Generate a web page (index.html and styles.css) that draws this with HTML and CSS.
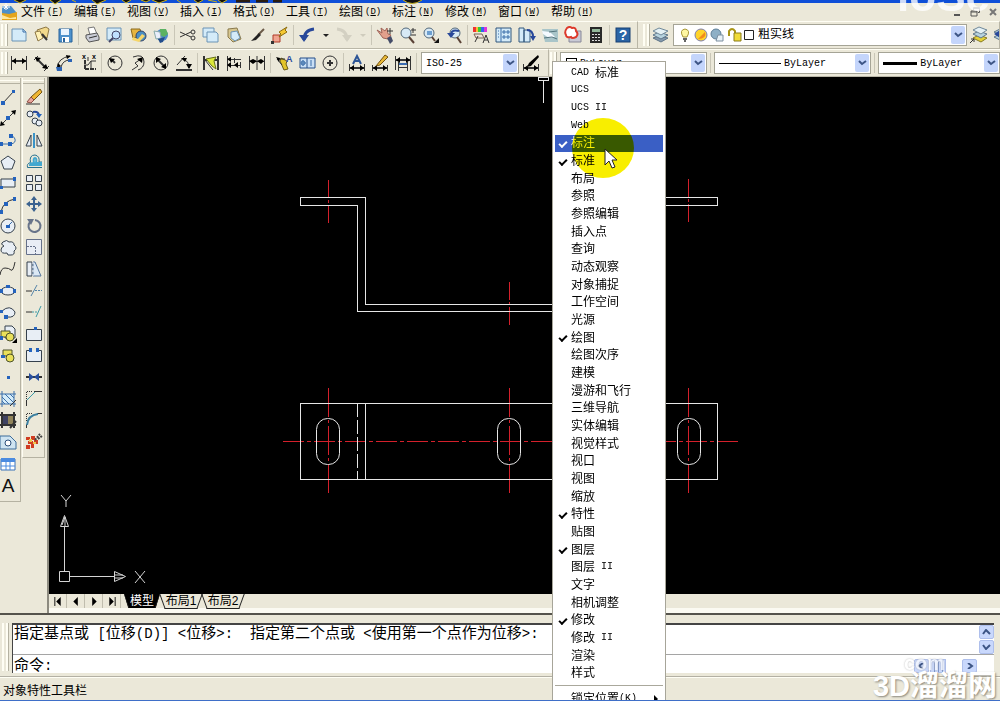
FILE: index.html
```
<!DOCTYPE html>
<html lang="zh-CN">
<head>
    <meta charset="UTF-8">
    <meta name="viewport" content="width=device-width, initial-scale=1.0">
    <title>CAD</title>
    <link rel="stylesheet" href="styles.css">
</head>
<body>
    <div class="app">
        <div class="title-strip">
            <svg class="title-marks" width="460" height="6" viewBox="0 0 460 6">
                <path class="mark" d="M14 0l6 3 6-3M50 0l5 4 6-4M72 0l4 2M92 0l5 4 9-4M122 0l4 3 5-3M141 0l5 2 4-2M152 0l7 3 8-3M177 0l4 3M194 0l4 3 5-3M208 0l9 2M218 0l4 3 5-3"/>
                <path class="mark-dark" d="M236 1h14M256 1h12M273 1h9"/>
                <path class="mark" d="M403 0q9 7 19 0"/>
            </svg>
        </div>

        <nav class="menubar">
            <svg class="app-icon" width="16" height="18" viewBox="0 0 16 18"><path fill="#4c8fc9" d="M1 3l9 0 5 6v3H1z"/><path fill="#e4a51c" d="M1 10l7 1 8-2v8H1z"/><path fill="#ffe79b" d="M1 12l8 3 6-1v2H1z"/><path stroke="#fff" fill="none" d="M5 0v7M1 4h8M3 2l4 4M7 2L3 6"/></svg>
            <div class="menus">
                <button>文件<span class="key">(<u>F</u>)</span></button>
                <button>编辑<span class="key">(<u>E</u>)</span></button>
                <button>视图<span class="key">(<u>V</u>)</span></button>
                <button>插入<span class="key">(<u>I</u>)</span></button>
                <button>格式<span class="key">(<u>O</u>)</span></button>
                <button>工具<span class="key">(<u>T</u>)</span></button>
                <button>绘图<span class="key">(<u>D</u>)</span></button>
                <button>标注<span class="key">(<u>N</u>)</span></button>
                <button>修改<span class="key">(<u>M</u>)</span></button>
                <button>窗口<span class="key">(<u>W</u>)</span></button>
                <button>帮助<span class="key">(<u>H</u>)</span></button>
            </div>
            <div class="window-buttons">
                <button aria-label="最小化"><svg width="10" height="10" viewBox="0 0 10 10"><path stroke="#555" stroke-width="2" d="M2 8h6"/></svg></button>
                <button aria-label="还原"><svg width="10" height="10" viewBox="0 0 10 10"><path stroke="#555" fill="none" d="M3.500 3V.5h6v5H8M3 1.500h6M1 4h6v5H1zM1 5h6"/></svg></button>
                <button aria-label="关闭"><svg width="10" height="10" viewBox="0 0 10 10"><path stroke="#777" stroke-width="2" d="M2 2l6 6M8 2L2 8"/></svg></button>
            </div>
        </nav>

        <div class="toolrow">
            <div class="toolbar standard">
                <span class="grip"></span>
                <button aria-label="新建"><svg viewBox="0 0 18 18"><path class="sheet" d="M2 3h11l3 3v9H2z"/><path class="b" d="M13 3v3h3"/></svg></button>
                <button aria-label="打开"><svg viewBox="0 0 18 18"><path fill="#f2d98c" stroke="#8d7745" d="M4 4l9-3 3 2-2 9-8-2z"/><path fill="#fff1b5" stroke="#8d7745" d="M2 6l5-1 3 7-5 3z"/><path stroke="#333" stroke-width="2" d="M9 8l5 6"/></svg></button>
                <button aria-label="保存"><svg viewBox="0 0 18 18"><path fill="#4d91cc" stroke="#28629b" d="M3 3h13v13H3z"/><path fill="#e9f4ff" d="M5 3h8v6H5z"/><path fill="#fff" d="M6 11h7v5H6z"/><path fill="#28629b" d="M7 12h2v4H7z"/></svg></button>
                <span class="sep"></span>
                <button aria-label="打印"><svg viewBox="0 0 18 18"><path fill="#fff" stroke="#777" d="M5 2l6-1 3 7-7 1z"/><path fill="#c9ccd6" stroke="#555" d="M3 9l11-2 2 4v3l-10 2-3-4z"/><path class="k" d="M6 12l8-2"/></svg></button>
                <button aria-label="打印预览"><svg viewBox="0 0 18 18"><path class="sheet" d="M1 2h14v12H1z"/><circle cx="10" cy="9" r="4" fill="#bfe0ff" stroke="#446"/><path stroke="#446" stroke-width="2" d="M7 12l-4 4"/></svg></button>
                <button aria-label="发布"><svg viewBox="0 0 18 18"><path fill="#e5b440" stroke="#8a6a1e" d="M2 3h9l2 7-9 2z"/><circle cx="12" cy="10" r="5" fill="#4b8fc2" stroke="#346"/><path fill="#f6d66a" d="M4 11l5 2 4-5 3 2-6 6-7-2z"/></svg></button>
                <button aria-label="三维 DWF"><svg viewBox="0 0 18 18"><circle cx="10" cy="9" r="6" fill="#4d88cc"/><path fill="#5bb262" d="M8 3l6 0 2 5-4 3-4-2z"/><path fill="#e9eefb" stroke="#8aa" d="M2 5l6 1 1 6-5 1z"/><path fill="#234d8c" d="M6 13l7-2-2 5-3 1z"/></svg></button>
                <span class="sep"></span>
                <button aria-label="剪切"><svg viewBox="0 0 18 18"><path class="k" d="M1 6l11 5M1 11l11-5"/><circle cx="14" cy="6" r="2" class="k"/><circle cx="14" cy="12" r="2" class="k"/></svg></button>
                <button aria-label="复制"><svg viewBox="0 0 18 18"><path class="sheet" d="M1 2h11v9H1z"/><path class="sheet" d="M5 6h9l2 2v8H5z"/></svg></button>
                <button aria-label="粘贴"><svg viewBox="0 0 18 18"><path fill="#d8c78f" stroke="#8a7a4c" d="M3 3l9-1 4 11-8 3-5-5z"/><path class="sheet" d="M6 6l6-1 3 7-5 3-4-3z"/></svg></button>
                <button aria-label="特性匹配"><svg viewBox="0 0 18 18"><path stroke="#6b5a48" stroke-width="2" d="M16 3l-6 6"/><path fill="#222" d="M11 7l2 2-5 5-5 1z"/></svg></button>
                <button aria-label="块编辑器"><svg viewBox="0 0 18 18"><path fill="#f0a490" stroke="#b03b28" d="M2 9h7v7H2z"/><path fill="#f5c832" stroke="#8a6a10" d="M16 1l-8 5 2 2-2 3 8-5-2-2z"/><path fill="#333" d="M0 15h3v3H0z"/></svg></button>
                <span class="sep"></span>
                <button aria-label="放弃"><svg viewBox="0 0 18 18"><path fill="none" stroke="#28489a" stroke-width="3" d="M6 14Q6 4 16 3"/><path fill="#28489a" d="M1 9h10l-5 7z"/></svg></button>
                <button class="drop" aria-label="放弃列表"><svg viewBox="0 0 8 18"><path fill="#222" d="M1 8h6l-3 3z"/></svg></button>
                <button aria-label="重做"><svg viewBox="0 0 18 18"><path fill="none" stroke="#d3d0c2" stroke-width="3" d="M12 14Q12 4 2 3"/><path fill="#d3d0c2" d="M17 9H7l5 7z"/></svg></button>
                <button class="drop" aria-label="重做列表"><svg viewBox="0 0 8 18"><path fill="#cfccbd" d="M1 8h6l-3 3z"/></svg></button>
                <span class="sep"></span>
                <button aria-label="平移"><svg viewBox="0 0 18 18"><path fill="#e2a08c" stroke="#a06458" d="M1 4l5 3-1-5 4 3 2-3 1 6 3 1-3 4-5-1z"/><path fill="#444c68" d="M11 12l4-2 2 5-3 3z"/><path class="k" d="M14 2v6M11 5h6"/></svg></button>
                <button aria-label="实时缩放"><svg viewBox="0 0 18 18"><circle cx="7" cy="7" r="5" class="lens"/><path stroke="#5a4236" stroke-width="2" d="M10 11l5 6"/><path class="k" d="M14 2v5M12 4h5M12 9h5"/></svg></button>
                <button aria-label="窗口缩放"><svg viewBox="0 0 18 18"><circle cx="7" cy="7" r="5" class="lens"/><path fill="#6d9fd0" d="M5 5h5v4H5z"/><path stroke="#5a4236" stroke-width="2" d="M10 11l3 4"/><path fill="#111" d="M17 12v5h-5z"/></svg></button>
                <button aria-label="缩放上一个"><svg viewBox="0 0 18 18"><circle cx="10" cy="7" r="5" class="lens"/><path stroke="#5a4236" stroke-width="2" d="M12 11l4 6"/><path fill="none" stroke="#28489a" stroke-width="2" d="M6 8q1-5 8-3"/><path fill="#28489a" d="M2 7h8l-4 5z"/></svg></button>
                <span class="sep"></span>
                <button aria-label="特性"><svg viewBox="0 0 18 18"><path fill="#e33" d="M1 1h4v5H1z"/><path fill="#fb3" d="M4 1h2v5H4z"/><path fill="#3c3" d="M6 1h3v5H6z"/><path fill="#36e" d="M9 1h3v5H9z"/><path fill="#d3d" d="M12 1h3v5h-3z"/><path fill="#efe3dd" stroke="#765" d="M2 8h8l2 4H4z"/><path class="k" d="M3 16l3-6M11 17l3-8 3 8M12 14h4"/></svg></button>
                <button aria-label="设计中心"><svg viewBox="0 0 18 18"><path class="sheet dark" d="M1 2h15v14H1z"/><path class="b" d="M6 2v14M3 5h1M3 8h1M3 11h1M8 5h2v2H8zM12 5h2v2h-2zM8 10h2v2H8zM12 10h2v2h-2z"/></svg></button>
                <button aria-label="工具选项板"><svg viewBox="0 0 18 18"><path class="sheet dark" d="M1 2h5v14H1zM6 4h6v12H6z"/><path fill="none" stroke="#28489a" stroke-width="2" d="M9 4q6 0 6 7"/><path fill="#28489a" d="M12 10h6l-3 5z"/></svg></button>
                <button aria-label="图纸集"><svg viewBox="0 0 18 18"><path fill="#a9c5c9" d="M1 3h16v13H4z"/><path fill="#f4faff" d="M1 5l8 1 5 5-6 1-6-4z"/><path stroke="#53747d" fill="none" d="M3 12l8-1 5 2M8 6l8-1"/></svg></button>
                <button aria-label="标记集"><svg viewBox="0 0 18 18"><path fill="#c9cad6" stroke="#889" d="M5 5h12v11H5z"/><path fill="#fff" stroke="#dd3a2c" stroke-width="2" d="M3 2q3-2 5 0 4-1 4 3 3 3 0 6-4 2-5 0-5 1-5-2-2-3 1-7z"/></svg></button>
                <button aria-label="计算器"><svg viewBox="0 0 18 18"><path fill="#292929" d="M3 1h12v16H3z"/><path fill="#93b89a" d="M5 3h8v3H5z"/><path stroke="#ddd" stroke-width="1" stroke-dasharray="2 1" d="M5 8.500h8M5 11.500h8M5 14.500h8"/></svg></button>
                <span class="sep"></span>
                <button aria-label="帮助"><svg viewBox="0 0 18 18"><rect x="2" y="2" width="14" height="14" fill="#2b64a5" stroke="#173f73"/><text x="9" y="14" class="icon-text help">?</text></svg></button>
            </div>
            <div class="toolbar layers">
                <span class="grip"></span>
                <button aria-label="图层特性管理器"><svg viewBox="0 0 18 18"><path fill="#8499ad" stroke="#5d7488" d="M1 12l6-2 9 2-7 4z"/><path fill="#b7d3df" stroke="#5d7488" d="M1 9l6-3 9 3-7 4z"/><path fill="#e5f1f5" stroke="#6f8899" d="M1 5l6-3 9 3-7 4z"/></svg></button>
                <div class="combo layer-combo">
                    <svg width="76" height="16" viewBox="0 0 76 16"><path fill="#fff7a2" stroke="#a79635" d="M4 10Q0 3 6 2q6 1 2 8z"/><path stroke="#666" stroke-width="2" d="M4 12h4M5 14h2"/><circle cx="22" cy="8" r="6" fill="#ffd42b" stroke="#7d7fae"/><path fill="#f18a1c" d="M19 12l7-7q2 7-7 7z"/><circle cx="37" cy="7" r="5" fill="#8eb0c6" stroke="#5f7f97"/><path fill="#e7f1f7" stroke="#7c8fa0" d="M39 8h5v6h-7z"/><path fill="none" stroke="#a99516" stroke-width="2" d="M50 9V4q3-4 6 0v4"/><path fill="#f0db38" stroke="#8b7d1a" d="M55 6h7v8h-7z"/><path fill="#fff" stroke="#222" d="M65.500 3.500h9v9h-9z"/></svg>
                    <select aria-label="图层"><option>粗实线</option></select>
                    <span class="arrow"><svg viewBox="0 0 9 6"><path d="M1 1l3 3 4-3"/></svg></span>
                </div>
                <button aria-label="将对象的图层置为当前"><svg viewBox="0 0 18 18"><path fill="#e4d23a" stroke="#887b21" d="M3 12l6-3 8 3-6 4z"/><path fill="#b7d3df" stroke="#5d7488" d="M3 8l6-3 8 3-6 4z"/><path fill="#e5f1f5" stroke="#6f8899" d="M3 4l6-3 8 3-6 4z"/><path class="k" d="M0 17l4-4M1 13h3v3"/></svg></button>
                <button aria-label="上一个图层"><svg viewBox="0 0 18 18"><path fill="#b7d3df" stroke="#5d7488" d="M1 11l6-3 8 3-6 4zM1 6l6-3 8 3-6 4z"/><path fill="#28489a" d="M1 8l6-4v8z"/></svg></button>
            </div>
        </div>

        <div class="toolrow">
            <div class="toolbar dims">
                <span class="grip"></span>
                <button aria-label="线性"><svg viewBox="0 0 18 18"><path class="k" d="M1.500 2v14M16.500 2v14"/><path class="k2" d="M2 7h14"/><path d="M2 7l4-3v6zM16 7l-4-3v6z"/></svg></button>
                <button aria-label="对齐"><svg viewBox="0 0 18 18"><path class="k" d="M1 6l4-4M11 17l5-5"/><path class="k2" d="M4 5l9 9"/><path d="M2 3l6 1-4 4zM15 15l-6-1 4-4z"/></svg></button>
                <button aria-label="弧长"><svg viewBox="0 0 18 18"><path class="k" d="M5 13Q7 6 14 6M1 14Q2 4 14 2"/><path d="M1 15l1-6 3 3zM15 2l-5-1 1 4z"/><path fill="#2b63b5" d="M0 13h6v4H1zM12 5h4v3h-4z"/></svg></button>
                <button aria-label="坐标"><svg viewBox="0 0 18 18"><path class="k2" d="M6 6v9M6 15h11" stroke-dasharray="4 1"/><path class="k" d="M5 11h4l3-4h5M12 7v9M9 3v4"/><text x="3" y="5" class="icon-text tiny">x</text><text x="13" y="5" class="icon-text tiny">x</text></svg></button>
                <span class="sep"></span>
                <button aria-label="半径"><svg viewBox="0 0 18 18"><circle cx="9" cy="9" r="7" class="k"/><path class="k2" d="M6 6l3 3"/><path d="M3 4l6 1-4 4z"/></svg></button>
                <button aria-label="折弯"><svg viewBox="0 0 18 18"><path class="k" d="M4 3q11-4 11 5 0 6-6 8"/><path class="k" d="M3 16l6-4-3-3 6-4"/><path d="M14 3l-1 6-5-4z"/></svg></button>
                <button aria-label="直径"><svg viewBox="0 0 18 18"><circle cx="9" cy="9" r="7" class="k"/><path class="k2" d="M5 5l8 8"/><path d="M4 3l5 2-5 4zM14 15l-5-2 5-4z"/></svg></button>
                <button aria-label="角度"><svg viewBox="0 0 18 18"><path class="k" d="M2 11L10 2M8 5q6 2 6 9"/><path class="k2" d="M1 16h16"/><path d="M6 4l6 0-2 4zM14 15l-3-5h6z"/></svg></button>
                <span class="sep"></span>
                <button aria-label="快速标注"><svg viewBox="0 0 18 18"><path class="k2" d="M2 2v14M16 2v14M2 6h14"/><path fill="#dce83a" stroke="#66701a" d="M4 5l10-2-2 4 2 8-4-3z"/><path class="k" d="M3 6l8 10"/></svg></button>
                <button aria-label="基线"><svg viewBox="0 0 18 18"><path class="k" d="M2.500 2v15M9.500 4v5M15.500 8v6M2 5.500h14M2 11.500h14"/><path d="M2 5l4-2v5zM9 11l4-3v6zM2 11l4-3v6z"/></svg></button>
                <button aria-label="连续"><svg viewBox="0 0 18 18"><path class="k" d="M1.500 2v14M9 2v14M16.500 2v14M1 7.500h15"/><path d="M1 7l4-2v5zM9 7L5 5v5zM9 7l4-2v5zM16 7l-3-2v5z"/></svg></button>
                <span class="sep"></span>
                <button aria-label="快速引线"><svg viewBox="0 0 18 18"><path fill="#e3c52a" stroke="#6b5d16" d="M6 4l6 3-1 3 2 5-4 1-4-9z"/><path class="k" d="M2 5h8M2 5l5 6"/><path d="M1 3l4 1-1 4z"/><text x="11" y="8" class="icon-text small">A</text></svg></button>
                <button aria-label="公差"><svg viewBox="0 0 18 18"><path fill="#c9dff5" stroke="#254f8a" d="M2 4h15v10H2zM9 4v10"/><circle cx="5" cy="9" r="2" class="b"/><path class="b" d="M3 9h5M5 6v6M13 6v6"/></svg></button>
                <button aria-label="圆心标记"><svg viewBox="0 0 18 18"><circle cx="9" cy="9" r="7" class="k"/><path class="k2" d="M9 6v6M6 9h6"/></svg></button>
                <span class="sep"></span>
                <button aria-label="编辑标注"><svg viewBox="0 0 18 18"><path class="k" d="M1.500 10v7M16.500 10v7"/><path class="k2" d="M2 14h14"/><path d="M2 14l4-3v6zM16 14l-4-3v6z"/><path stroke="#2d5596" stroke-width="2" fill="none" d="M5 10l4-8 4 8M6 7h6"/></svg></button>
                <button aria-label="编辑标注文字"><svg viewBox="0 0 18 18"><path class="k" d="M1.500 11v6M16.500 11v6"/><path class="k2" d="M2 14h14"/><path d="M2 14l4-3v6zM16 14l-4-3v6z"/><path fill="#e9b837" stroke="#735413" d="M14 1l3 2-8 8-4 1z"/></svg></button>
                <button aria-label="标注更新"><svg viewBox="0 0 18 18"><path stroke="#3b6cb0" stroke-width="2" d="M4 10h10"/><path class="k" d="M1.500 2v14M16.500 2v14M4.500 8v9M13.500 8v9M4 13.500h10"/><path class="k2" d="M2 6h14"/><path d="M2 6l4-3v6zM16 6l-4-3v6z"/></svg></button>
                <span class="sep"></span>
                <div class="combo style-combo">
                    <select aria-label="标注样式"><option>ISO-25</option></select>
                    <span class="arrow"><svg viewBox="0 0 9 6"><path d="M1 1l3 3 4-3"/></svg></span>
                </div>
                <button aria-label="标注样式管理"><svg viewBox="0 0 18 18"><path class="k" d="M1.500 10v7M16.500 10v7"/><path class="k2" d="M2 14h14"/><path d="M2 14l4-3v6zM16 14l-4-3v6zM16 1l1 2-8 9-4 1 2-4z"/></svg></button>
            </div>
            <div class="toolbar props">
                <span class="grip"></span>
                <div class="combo color-combo">
                    <span class="swatch"></span>
                    <select aria-label="颜色"><option>ByLayer</option></select>
                    <span class="arrow"><svg viewBox="0 0 9 6"><path d="M1 1l3 3 4-3"/></svg></span>
                </div>
                <span class="sep"></span>
                <div class="combo linetype-combo">
                    <span class="line"></span>
                    <select aria-label="线型"><option>ByLayer</option></select>
                    <span class="arrow"><svg viewBox="0 0 9 6"><path d="M1 1l3 3 4-3"/></svg></span>
                </div>
                <span class="sep"></span>
                <div class="combo weight-combo">
                    <span class="line thick"></span>
                    <select aria-label="线宽"><option>ByLayer</option></select>
                    <span class="arrow"><svg viewBox="0 0 9 6"><path d="M1 1l3 3 4-3"/></svg></span>
                </div>
            </div>
        </div>

        <div class="workspace">
            <div class="dock">
                <div class="palette draw">
                    <button aria-label="直线"><svg viewBox="0 0 18 18"><path class="k" d="M4 15L15 3"/><path class="dot" d="M2 13h4v4H2zM13 2h3v3h-3z"/></svg></button>
                    <button aria-label="构造线"><svg viewBox="0 0 18 18"><path class="k" d="M2 16L16 2"/><path d="M1 17l1-5 4 4zM17 1l-5 1 4 4z"/><path class="dot" d="M7 7h4v4H7z"/></svg></button>
                    <button aria-label="多段线"><svg viewBox="0 0 18 18"><path class="b" d="M2 13h10q5-1 4-5-1-3-4-3"/><path class="dot" d="M1 11h3v4H1zM9 11h4v4H9zM10 3h4v4h-4z"/></svg></button>
                    <button aria-label="正多边形"><svg viewBox="0 0 18 18"><path class="shape" d="M9 3l7 5-3 8H5L2 8z"/></svg></button>
                    <button aria-label="矩形"><svg viewBox="0 0 18 18"><path class="shape" d="M2 5h14v8H2z"/><path class="dot" d="M0 12h4v3H0zM14 3h3v4h-3z"/></svg></button>
                    <button aria-label="圆弧"><svg viewBox="0 0 18 18"><path class="k" d="M2 16Q4 5 16 3"/><path class="dot" d="M0 14h4v4H0zM5 6h4v4H5zM14 1h3v4h-3z"/></svg></button>
                    <button aria-label="圆"><svg viewBox="0 0 18 18"><circle cx="9" cy="9" r="7" class="shape"/><path class="b" d="M9 9l4-4"/><path class="dot" d="M7 8h4v3H7z"/></svg></button>
                    <button aria-label="修订云线"><svg viewBox="0 0 18 18"><path class="shape" d="M5 7q-4-2-1-4 4-3 6 0 5-1 5 3 4 3 0 6 1 4-3 4-4 1-4-2-6 1-6-3 0-3 3-4z"/></svg></button>
                    <button aria-label="样条曲线"><svg viewBox="0 0 18 18"><path class="k" d="M1 15q1-7 5-7t6 2 4-8"/></svg></button>
                    <button aria-label="椭圆"><svg viewBox="0 0 18 18"><ellipse cx="9" cy="9" rx="7" ry="4" class="shape"/><path class="dot" d="M0 7h4v4H0zM7 3h4v3H7zM14 7h3v4h-3z"/></svg></button>
                    <button aria-label="椭圆弧"><svg viewBox="0 0 18 18"><path class="shape" d="M3 7q8-7 13 1 0 6-8 5"/><path class="dot" d="M0 6h4v3H0zM5 11h4v4H5z"/></svg></button>
                    <button aria-label="插入块"><svg viewBox="0 0 18 18"><path class="shape" d="M6 1h7l3 3v9H6z"/><path class="gold" d="M2 6h9v6H2z"/><circle cx="11" cy="12" r="4" class="gold"/><path d="M18 13v5h-5z"/><path class="dot" d="M0 11h4v4H0z"/></svg></button>
                    <button aria-label="创建块"><svg viewBox="0 0 18 18"><path class="gold" d="M4 3h9v6H4z"/><circle cx="11" cy="11" r="4" class="gold"/><path class="dot" d="M2 8h4v3H2z"/></svg></button>
                    <button aria-label="点"><svg viewBox="0 0 18 18"><path class="dot" d="M8 8h3v3H8z"/></svg></button>
                    <button aria-label="图案填充"><svg viewBox="0 0 18 18"><path fill="#d5ecf8" d="M3 4h12v10H3z"/><path class="b" d="M3 7l7 7M3 11l3 3M6 4l9 9M11 4l4 4M0 4h17M0 14h17M3 1v16M15 1v16"/><path class="k" d="M11 16l6-6"/></svg></button>
                    <button aria-label="渐变色"><svg viewBox="0 0 18 18"><path fill="#3e4262" d="M3 4h6v10H3z"/><path fill="#91845a" d="M9 4h6v10H9z"/><path class="k2" d="M0 4h17M0 14h17M3 1v16M15 1v16M11 17l6-7"/></svg></button>
                    <button aria-label="面域"><svg viewBox="0 0 18 18"><path fill="#cfe4f1" stroke="#3c6c9a" d="M1 3h10l6 6v7H1z"/><circle cx="9" cy="10" r="3" fill="#fff" stroke="#2b4e79"/></svg></button>
                    <button aria-label="表格"><svg viewBox="0 0 18 18"><path fill="#fff" stroke="#3b72ba" d="M2 4h14v11H2z"/><path fill="#4b8be0" d="M2 3h14v4H2z"/><path stroke="#4b8be0" d="M2 11h14M7 6v9M11 6v9"/></svg></button>
                    <button aria-label="多行文字"><svg viewBox="0 0 18 18"><text x="9" y="16" class="icon-text letter">A</text></svg></button>
                </div>
                <div class="palette modify">
                    <button aria-label="删除"><svg viewBox="0 0 18 18"><path class="k" d="M1 16h14"/><path fill="#f0b632" stroke="#735413" d="M15 1l2 3-8 8-3-3z"/><path fill="#e8a59b" stroke="#8b4c43" d="M6 9l3 3-3 3-4-1z"/></svg></button>
                    <button aria-label="复制对象"><svg viewBox="0 0 18 18"><circle cx="5" cy="5" r="3" class="shape"/><circle cx="10" cy="12" r="3" class="shape"/><circle cx="14" cy="14" r="3" class="shape"/><path stroke="#28489a" stroke-width="2" fill="none" d="M8 3q5-1 6 3"/><path class="dot" d="M11 5h6l-3 4z"/></svg></button>
                    <button aria-label="镜像"><svg viewBox="0 0 18 18"><path class="shape" d="M6 4v11H1zM12 4v11h5z"/><path stroke="#3a93c8" stroke-width="2" d="M9 2v15"/></svg></button>
                    <button aria-label="偏移"><svg viewBox="0 0 18 18"><path fill="none" stroke="#28728f" d="M17 15.500H2.500q-1-4 3-5Q4 3 10 3q5 1 4 7h3"/><path fill="none" stroke="#43a8d0" stroke-width="2" d="M17 13H5q0-2 4-2-1-5 1-5t1 5h6"/></svg></button>
                    <button aria-label="阵列"><svg viewBox="0 0 18 18"><path class="shape" d="M1.500 1.500h6v6h-6zM10.500 1.500h6v6h-6zM1.500 10.500h6v6h-6zM10.500 10.500h6v6h-6z"/></svg></button>
                    <button aria-label="移动"><svg viewBox="0 0 18 18"><path stroke="#3b628f" stroke-width="2" d="M9 3v12M3 9h12"/><path fill="#3b628f" d="M9 1l3 4H6zM9 17l3-4H6zM1 9l4-3v6zM17 9l-4-3v6z"/></svg></button>
                    <button aria-label="旋转"><svg viewBox="0 0 18 18"><path fill="none" stroke="#68748a" stroke-width="2" d="M5 5a6 6 0 1 0 5-2"/><path fill="#68748a" d="M2 2h7l-3 6z"/></svg></button>
                    <button aria-label="缩放"><svg viewBox="0 0 18 18"><path fill="#e9edf5" stroke="#66718a" d="M1.500 1.500h15v15h-15z"/><path fill="none" stroke="#66718a" stroke-dasharray="2 1" d="M2 8.500h8.500V17"/></svg></button>
                    <button aria-label="拉伸"><svg viewBox="0 0 18 18"><path class="shape" d="M2 2h5v14H2z"/><path fill="#dbe8f4" stroke="#55759c" d="M8 2h2l6 14H8z"/><path stroke="#fff" stroke-dasharray="2 2" d="M8 2v14"/></svg></button>
                    <button aria-label="修剪"><svg viewBox="0 0 18 18"><path class="k" d="M1 9h6"/><path stroke="#5584a8" fill="none" d="M6 14l6-11"/><path stroke="#5584a8" stroke-dasharray="2 1" d="M10 8.500h7"/></svg></button>
                    <button aria-label="延伸"><svg viewBox="0 0 18 18"><path class="k" d="M1 9h6"/><path stroke="#3d9aa6" stroke-dasharray="2 1" d="M7 9h5"/><path stroke="#3d9aa6" d="M11 14l5-11"/></svg></button>
                    <button aria-label="打断于点"><svg viewBox="0 0 18 18"><path class="shape" d="M1.500 4.500h15v11h-15z"/><path class="dot" d="M9 2h3v3H9z"/></svg></button>
                    <button aria-label="打断"><svg viewBox="0 0 18 18"><path class="shape" d="M4 4.500H1.500v11h15v-11H14"/><path class="dot" d="M4 2h3v4H4zM11 2h3v4h-3z"/></svg></button>
                    <button aria-label="合并"><svg viewBox="0 0 18 18"><path class="k2" d="M1 9h16"/><path fill="#284f9f" d="M9 9L4 5v8zM9 9l5-4v8z"/></svg></button>
                    <button aria-label="倒角"><svg viewBox="0 0 18 18"><path class="k" d="M1.500 17v-6M9 2.500h8"/><path stroke="#3d9aa6" d="M2 11l8-8"/><path class="k" stroke-dasharray="1 1" d="M1.500 10V2.500H8"/></svg></button>
                    <button aria-label="圆角"><svg viewBox="0 0 18 18"><path class="k" d="M1.500 17v-4M12 2.500h5"/><path stroke="#3b7fa0" stroke-width="2" fill="none" d="M2 14Q3 4 13 3"/><path class="k" stroke-dasharray="1 1" d="M1.500 10V2.500H8"/></svg></button>
                    <button aria-label="分解"><svg viewBox="0 0 18 18"><path fill="#cf3c22" d="M1 5h4v3H1zM6 4h4v4H6zM3 9h5v3H3zM9 8h4v4H9zM1 13h4v4H1zM6 12h3v4H6z"/><path fill="#f1c44b" d="M4 7h3v3H4zM8 10h3v2H8z"/><path stroke="#444" stroke-width="2" stroke-dasharray="2 1" d="M10 8l5-6M13 7l4-3"/></svg></button>
                </div>
            </div>

            <div class="drawing-area">
                
                <svg class="drawing" width="951" height="517" viewBox="49 77 951 517" shape-rendering="crispEdges">
                    <g class="center">
                        <path d="M328.500 180v45M509.500 282v45M688.500 179v44" stroke-dasharray="18 2 3 2"/>
                        <path d="M328.500 388v107M509.500 388v107M688.500 388v107" stroke-dasharray="29 3 3 3"/>
                        <path d="M283 441.500h457" stroke-dasharray="21 3 4 3"/>
                    </g>
                    <g class="outline">
                        <path d="M560 311.500H357.500V205.500H300.500V197.500H365.500V304.500H560"/>
                        <path d="M650 197.500h67.500v8H650"/>
                        <path d="M300.500 403.500h417v76h-417zM365.500 403v76"/>
                        <path d="M357.500 403v76" stroke-dasharray="14 3"/>
                        <g shape-rendering="auto">
                            <rect x="316.500" y="418.500" width="23" height="46" rx="11"/>
                            <rect x="497.500" y="418.500" width="23" height="46" rx="11"/>
                            <rect x="677.500" y="418.500" width="23" height="46" rx="11"/>
                        </g>
                        <path d="M543.500 80v23M538 77h10v3h-10z"/>
                    </g>
                    <g class="ucs" shape-rendering="auto">
                        <path d="M59.500 571.500h10v10h-10zM64.500 571V527M70 576.500h44M60.500 526.500l4-11 4 11zM114.500 571.500l11 5-11 5zM61 495l5 6 5-6M66 501v6M135 571l10 12M145 571l-10 12M62 525l3-8v9M115 575h8M115 578h8"/>
                    </g>
                </svg>
                <div class="layout-tabs">
                    <button class="nav" aria-label="第一个"><svg viewBox="0 0 10 10"><path d="M1 0h1v10H1zM8 0v10L3 5z"/></svg></button>
                    <button class="nav" aria-label="上一个"><svg viewBox="0 0 10 10"><path d="M7 0v10L2 5z"/></svg></button>
                    <button class="nav" aria-label="下一个"><svg viewBox="0 0 10 10"><path d="M3 0v10l5-5z"/></svg></button>
                    <button class="nav" aria-label="最后一个"><svg viewBox="0 0 10 10"><path d="M8 0h1v10H8zM2 0v10l5-5z"/></svg></button>
                    <button class="tab active">模型</button>
                    <button class="tab">布局1</button>
                    <button class="tab">布局2</button>
                </div>
            </div>
        </div>

        <div class="command-panel">
            <span class="grip"></span>
            <div class="command-box">
                <div class="history">
                    <div class="history-text">指定基点或<span class="mono"> [</span>位移<span class="mono">(D)] &lt;</span>位移<span class="mono">&gt;:  </span>指定第二个点或<span class="mono"> &lt;</span>使用第一个点作为位移<span class="mono">&gt;:</span></div>
                    <div class="scroll-y">
                        <button class="scroll-button" aria-label="向上"><svg viewBox="0 0 9 6"><path d="M1 5l3-4 4 4"/></svg></button>
                        <button class="scroll-button" aria-label="向下"><svg viewBox="0 0 9 6"><path d="M1 1l3 4 4-4"/></svg></button>
                    </div>
                </div>
                <div class="prompt">
                    <label for="command">命令<span class="mono">:</span></label>
                    <input type="text" id="command">
                    <div class="scroll-x">
                        <button class="scroll-button" aria-label="向左"><svg viewBox="0 0 9 6"><path d="M6 0L2 3l4 3"/></svg></button>
                        <span class="thumb"></span>
                        <button class="scroll-button" aria-label="向右"><svg viewBox="0 0 9 6"><path d="M3 0l4 3-4 3"/></svg></button>
                    </div>
                </div>
            </div>
        </div>

        <footer class="statusbar">对象特性工具栏</footer>

        <div class="popup">
            <div class="popup-list">
                <button><span class="mono">CAD </span>标准</button>
                <button><span class="mono">UCS</span></button>
                <button><span class="mono">UCS II</span></button>
                <button><span class="mono">Web</span></button>
                <button class="checked selected">标注</button>
                <button class="checked">标准</button>
                <button>布局</button>
                <button>参照</button>
                <button>参照编辑</button>
                <button>插入点</button>
                <button>查询</button>
                <button>动态观察</button>
                <button>对象捕捉</button>
                <button>工作空间</button>
                <button>光源</button>
                <button class="checked">绘图</button>
                <button>绘图次序</button>
                <button>建模</button>
                <button>漫游和飞行</button>
                <button>三维导航</button>
                <button>实体编辑</button>
                <button>视觉样式</button>
                <button>视口</button>
                <button>视图</button>
                <button>缩放</button>
                <button class="checked">特性</button>
                <button>贴图</button>
                <button class="checked">图层</button>
                <button>图层<span class="mono"> II</span></button>
                <button>文字</button>
                <button>相机调整</button>
                <button class="checked">修改</button>
                <button>修改<span class="mono"> II</span></button>
                <button>渲染</button>
                <button>样式</button>
            </div>
            <div class="popup-more">
                <button>锁定位置<span class="mono">(<u>K</u>)</span><span class="submenu"></span></button>
            </div>
            <span class="click-halo"></span>
            <svg class="cursor" width="14" height="22" viewBox="0 0 14 22"><path fill="#fff" stroke="#222" d="M1 1v16l4-4 3 7 3-1-3-7h5z"/></svg>
        </div>

        <div class="brand-top">ioSe</div>
        <div class="brand-com">com</div>
        <div class="brand">3D溜溜网</div>
    </div>
</body>
</html>
```
FILE: styles.css
```
* {
    box-sizing: border-box;
}

body {
    margin: 0;
    font-family: "Liberation Sans", "Noto Sans CJK SC", sans-serif;
    font-size: 12px;
    line-height: 16px;
    color: #000;
}

button {
    margin: 0;
    padding: 0;
    border: none;
    background: none;
    font: inherit;
    color: inherit;
}

svg {
    display: block;
}

.mono {
    font-family: "Liberation Mono", monospace;
    font-size: 10px;
    white-space: pre;
}

.app {
    position: relative;
    display: flex;
    flex-direction: column;
    height: 100vh;
    overflow: hidden;
    background-color: #ebe8d9;
    border-bottom: 1px solid #3f6fc8;
}

.title-strip {
    height: 3px;
    background-color: #0f4fd8;
}

.title-marks {
    position: absolute;
    z-index: 1;
}

.mark {
    fill: #111;
    stroke: #c9b21c;
}

.mark-dark {
    stroke: #2a1c10;
    stroke-width: 3;
}

/* Menu bar */
.menubar {
    display: flex;
    align-items: center;
    height: 18px;
    padding: 0 2px 0 1px;
}

.menus {
    display: grid;
    grid-template-columns: repeat(11, 53px);
    margin-left: 4px;
    flex: 1;
}

.menus button {
    display: flex;
    align-items: center;
}

.key {
    margin-left: 2px;
    font-family: "Liberation Mono", monospace;
    font-size: 9px;
}

.window-buttons {
    display: flex;
    gap: 8px;
}

/* Toolbars */
.toolrow {
    display: flex;
    height: 28px;
}

.toolbar {
    display: flex;
    align-items: center;
    gap: 1px;
    padding-left: 1px;
    border-top: 1px solid #fffef4;
    border-right: 1px solid #b9b6a6;
    border-bottom: 1px solid #bab7a8;
}

.toolbar.standard {
    width: 638px;
}

.toolbar.dims {
    width: 549px;
}

.toolbar.layers,
.toolbar.props {
    flex: 1;
    min-width: 0;
    overflow: hidden;
}

.toolbar.layers {
    padding-left: 5px;
}

.toolbar.props {
    border-right: none;
}

.grip {
    flex: none;
    width: 6px;
    height: 22px;
    border: solid #fffef4;
    border-width: 0 2px;
    box-shadow: 1px 0 #b5b2a2;
}

.toolbar button {
    display: flex;
    justify-content: center;
    flex: none;
    width: 22px;
}

.toolbar button.drop {
    width: 13px;
}

.toolbar svg,
.palette svg {
    width: 18px;
    height: 18px;
    flex: none;
}

.toolbar .drop svg {
    width: 8px;
}

.sep {
    flex: none;
    width: 1px;
    height: 20px;
    margin: 0 1px;
    background-color: #c9c6b7;
}

.props .sep {
    margin: 0 2px;
}

.k {
    fill: none;
    stroke: #333;
}

.k2 {
    fill: none;
    stroke: #333;
    stroke-width: 2;
}

.b {
    fill: none;
    stroke: #3b6ea9;
}

.dot {
    fill: #2463bd;
}

.sheet {
    fill: #d4ebf9;
    stroke: #6a93b5;
}

.sheet.dark {
    stroke: #31567d;
}

.shape {
    fill: #e8eef5;
    stroke: #35404c;
}

.gold {
    fill: #e9e05a;
    stroke: #4c522c;
}

.lens {
    fill: #d7e9f5;
    stroke: #53687a;
}

.icon-text {
    font-family: "Liberation Sans", sans-serif;
    font-weight: bold;
}

.help {
    font-size: 14px;
    fill: #fff;
    text-anchor: middle;
}

.tiny {
    font-size: 7px;
}

.small {
    font-size: 9px;
    fill: #28489a;
}

.letter {
    font-size: 19px;
    font-weight: normal;
    fill: #111;
    text-anchor: middle;
}

/* Drop-downs */
.combo {
    display: flex;
    align-items: center;
    height: 22px;
    padding: 1px;
    background-color: #fff;
    border: 1px solid #a5a496;
}

.combo select {
    flex: 1;
    min-width: 0;
    height: 18px;
    padding: 0 3px;
    border: none;
    background: none;
    appearance: none;
    font-family: "Liberation Mono", "Noto Sans CJK SC", monospace;
    font-size: 10px;
    color: #000;
}

.combo .arrow {
    display: flex;
    align-items: center;
    justify-content: center;
    flex: none;
    width: 14px;
    height: 18px;
    background-color: #c4d5fb;
    border-radius: 2px;
    pointer-events: none;
}

.toolbar .arrow svg,
.scroll-button svg {
    width: 9px;
    height: 6px;
    fill: none;
    stroke: #3d5585;
    stroke-width: 2;
}

.layer-combo {
    flex: none;
    width: 294px;
}

.layer-combo > svg {
    width: 76px;
    height: 16px;
    margin-left: 4px;
}

.layer-combo select {
    font-size: 12px;
}

.style-combo {
    width: 98px;
    margin-left: 2px;
}

.color-combo {
    width: 147px;
    margin-left: 3px;
}

.linetype-combo {
    flex: 159 1 0;
}

.weight-combo {
    flex: 122 1 0;
}

.swatch {
    width: 11px;
    height: 11px;
    margin-left: 4px;
    border: 1px solid #000;
}

.line {
    width: 62px;
    height: 1px;
    margin-left: 3px;
    background-color: #000;
}

.line.thick {
    width: 34px;
    height: 3px;
}

/* Tool palettes and drawing area */
.workspace {
    display: flex;
    flex: 1;
    min-height: 0;
    background-color: #ebe8d9;
}

.dock {
    display: flex;
    align-items: flex-start;
    width: 49px;
    padding-top: 1px;
    border-right: 2px solid #8d8b80;
}

.palette {
    display: grid;
    justify-items: center;
    padding: 8px 0 5px;
    background:
        linear-gradient(#fffef4, #fffef4) 0 2px / 100% 1px no-repeat,
        linear-gradient(#b5b2a2, #b5b2a2) 0 5px / 100% 1px no-repeat;
    border-right: 1px solid #b5b2a2;
    border-bottom: 1px solid #b5b2a2;
}

.palette button {
    display: flex;
    align-items: center;
    justify-content: center;
    min-height: 0;
}

.draw {
    grid-template-rows: repeat(19, 1fr);
    width: 25px;
    height: 424px;
    margin-left: -4px;
}

.modify {
    grid-template-rows: repeat(17, 1fr);
    width: 23px;
    height: 380px;
    margin-left: 1px;
    border-left: 1px solid #fffef4;
}

.drawing-area {
    display: flex;
    flex-direction: column;
    flex: 1;
    min-width: 0;
    background-color: #000;
}

.drawing {
    flex: none;
}

.outline {
    fill: none;
    stroke: #e6e6e6;
}

.center {
    fill: none;
    stroke: #d4202b;
}

.ucs {
    fill: none;
    stroke: #d4d4d4;
}

.layout-tabs {
    display: flex;
    flex: 1;
    background-color: #ebe8d9;
    border-bottom: 5px solid #fbfaf2;
}

.layout-tabs .nav {
    display: flex;
    align-items: center;
    justify-content: center;
    width: 18px;
    height: 14px;
    border-right: 1px solid #c0bdae;
}

.nav svg {
    width: 10px;
    height: 9px;
}

.layout-tabs .tab {
    position: relative;
    height: 14px;
    width: 42px;
    line-height: 13px;
}

/* slanted sides of a sheet tab */
.tab::before,
.tab::after {
    content: "";
    position: absolute;
    top: 0;
    width: 50%;
    height: 14px;
    border-bottom: 1px solid #222;
}

.tab::before {
    left: 2px;
    border-left: 1px solid #222;
    transform: skewX(20deg);
}

.tab::after {
    right: 2px;
    border-right: 1px solid #222;
    transform: skewX(-20deg);
}

.layout-tabs .tab.active {
    width: 36px;
    margin-left: 3px;
    color: #fff;
    background: #000;
    clip-path: polygon(0 0, 100% 0, 88% 100%, 12% 100%);
}

/* Command line */
.command-panel {
    display: flex;
    gap: 4px;
    height: 64px;
    padding: 8px 6px 3px 2px;
    border-top: 2px solid #55534c;
    border-bottom: 1px solid #b3b0a4;
}

.command-panel .grip {
    height: 48px;
}

.command-box {
    display: flex;
    flex-direction: column;
    flex: 1;
    border-top: 2px solid #444;
    border-left: 1px solid #444;
    background-color: #fff;
    font-size: 15px;
}

.command-box .mono {
    font-size: 14px;
}

.history {
    display: flex;
    justify-content: space-between;
    height: 30px;
    border-bottom: 1px solid #a5a5a5;
}

.history-text {
    padding-left: 1px;
    line-height: 16px;
    white-space: nowrap;
}

.scroll-y {
    display: flex;
    flex-direction: column;
    gap: 1px;
}

.scroll-button {
    display: flex;
    align-items: center;
    justify-content: center;
    width: 15px;
    height: 14px;
    background-color: #c9d8fc;
    border: 1px solid #aebfec;
    border-radius: 2px;
}

.prompt {
    display: flex;
    align-items: center;
    flex: 1;
    padding: 2px 17px 0 1px;
}

.prompt input {
    flex: 1;
    min-width: 0;
    height: 16px;
    border: none;
    outline: none;
    background: none;
}

.scroll-x {
    display: flex;
    gap: 1px;
    width: 63px;
}

.thumb {
    width: 16px;
    margin-right: auto;
    border: 1px solid #aebfec;
    background: repeating-linear-gradient(90deg, #c9d8fc 0 3px, #7d95c9 3px 4px);
}

.statusbar {
    height: 23px;
    padding-left: 3px;
    border-top: 1px solid #fffef4;
    line-height: 26px;
}

/* Toolbar list popup */
.popup {
    position: absolute;
    top: 61px;
    left: 552px;
    width: 114px;
    padding: 2px;
    background-color: #fff;
    border: 1px solid #a7a599;
    isolation: isolate;
}

.popup-list {
    display: grid;
    grid-auto-rows: 1fr;
    height: 618px;
}

.popup button {
    position: relative;
    display: flex;
    align-items: center;
    width: 100%;
    padding-left: 16px;
    line-height: 14px;
    text-align: left;
    min-height: 0;
}

.popup .selected {
    background-color: #3a5fc5;
    color: #fff;
}

.checked::before {
    content: "";
    position: absolute;
    left: 4px;
    width: 6px;
    height: 3px;
    border: solid currentColor;
    border-width: 0 0 2px 2px;
    transform: rotate(-45deg);
}

.popup-more {
    margin-top: 3px;
    padding-top: 6px;
    border-top: 1px solid #aaa89c;
}

.submenu {
    margin: 0 5px 0 auto;
    border: solid transparent;
    border-width: 4px 0 4px 4px;
    border-left-color: #000;
}

.click-halo {
    position: absolute;
    top: 56px;
    left: 19px;
    width: 62px;
    height: 60px;
    border-radius: 50%;
    background-color: #f8ee00;
    mix-blend-mode: multiply;
    pointer-events: none;
}

.cursor {
    position: absolute;
    top: 86px;
    left: 51px;
}

/* Brand marks over the window */
.brand,
.brand-com,
.brand-top {
    position: absolute;
    font-family: "Liberation Sans", "Noto Sans CJK SC", sans-serif;
    font-weight: bold;
    color: #fff;
    white-space: nowrap;
    pointer-events: none;
}

.brand {
    right: 3px;
    bottom: 0;
    font-size: 29px;
    line-height: 27px;
    text-shadow: 1px 1px 2px #8b897f;
}

.brand-com {
    right: 55px;
    bottom: 27px;
    font-size: 20px;
    line-height: 20px;
    opacity: 0.7;
    text-shadow: 0 0 2px #999;
}

.brand-top {
    top: -26px;
    right: 10px;
    font-size: 44px;
    line-height: 44px;
    opacity: 0.8;
}
```
